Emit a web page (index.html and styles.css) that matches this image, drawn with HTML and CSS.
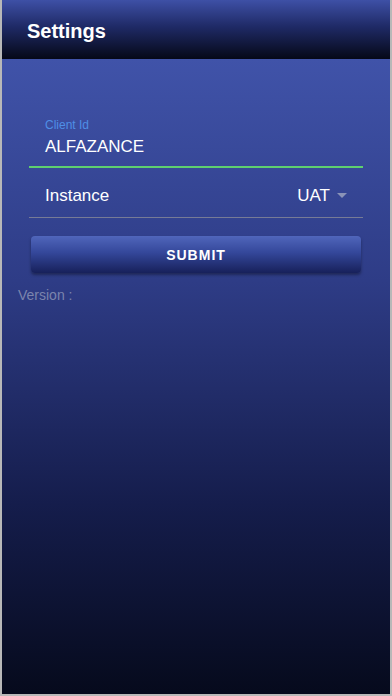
FILE: index.html
```html
<!DOCTYPE html>
<html lang="en">
<head>
    <meta charset="UTF-8">
    <meta name="viewport" content="width=device-width, initial-scale=1.0">
    <title>Settings</title>
    <link rel="stylesheet" href="styles.css">
</head>
<body>
    <div class="screen">
        <div class="header">
            <h1>Settings</h1>
        </div>
        <div class="content">
            <div class="form">
                <div class="field field-active">
                    <label>Client Id</label>
                    <div class="value">ALFAZANCE</div>
                </div>
                <div class="field field-select">
                    <span class="value">Instance</span>
                    <span class="select">UAT <span class="caret"></span></span>
                </div>
            </div>
            <button class="submit-button">SUBMIT</button>
            <p class="version">Version :</p>
        </div>
    </div>
</body>
</html>
```

FILE: styles.css
```css
/* Reset some default styles */
body, h1, p, button {
    margin: 0;
    padding: 0;
}

html, body {
    height: 100%;
}

body {
    font-family: "Liberation Sans", Arial, sans-serif;
    background-color: #b8b8b8;
}

.screen {
    height: 696px;
    margin: 0 2px;
    display: flex;
    flex-direction: column;
    border-bottom: 2px solid #b8b8b8;
    box-sizing: border-box;
}

.header {
    height: 59px;
    background: linear-gradient(to bottom, #3e50a6 0%, #1f2a66 45%, #050817 100%);
    padding-left: 25px;
    padding-top: 4px;
    box-sizing: border-box;
    display: flex;
    align-items: center;
}

.header h1 {
    color: #fff;
    font-size: 20px;
    font-weight: bold;
}

.content {
    flex: 1;
    background: linear-gradient(to bottom, #4053a9 0%, #2e3c86 35%, #151d4c 70%, #060a1c 100%);
    padding: 59px 0 0 0;
}

.form {
    margin: 0 27px;
}

.field {
    padding: 0 16px;
}

.field label {
    display: block;
    color: #4f8fe6;
    font-size: 12px;
    margin-bottom: 5px;
}

.field .value {
    color: #fff;
    font-size: 17px;
}

.field-active {
    border-bottom: 2px solid #5ed06f;
    padding-bottom: 9px;
}

.field-select {
    display: flex;
    justify-content: space-between;
    align-items: center;
    padding-top: 18px;
    padding-bottom: 11px;
    padding-right: 20px;
    border-bottom: 1px solid #767b96;
}

.select {
    color: #fff;
    font-size: 17px;
    display: flex;
    align-items: center;
    margin-right: -4px;
}

.caret {
    display: inline-block;
    width: 0;
    height: 0;
    margin-left: 7px;
    margin-top: -2px;
    border-left: 5px solid transparent;
    border-right: 5px solid transparent;
    border-top: 5px solid #8a93b8;
}

.submit-button {
    display: block;
    width: 330px;
    height: 37px;
    margin: 18px 0 0 29px;
    border: none;
    border-radius: 4px;
    background: linear-gradient(to bottom, #5066bb 0%, #34479a 45%, #17205a 100%);
    box-shadow: 0px 2px 3px rgba(0, 0, 0, 0.35);
    color: #fff;
    font-family: "Liberation Sans", Arial, sans-serif;
    font-size: 14px;
    font-weight: bold;
    letter-spacing: 1px;
}

.version {
    color: #7b84ad;
    font-size: 14px;
    margin: 14px 0 0 16px;
}
```
